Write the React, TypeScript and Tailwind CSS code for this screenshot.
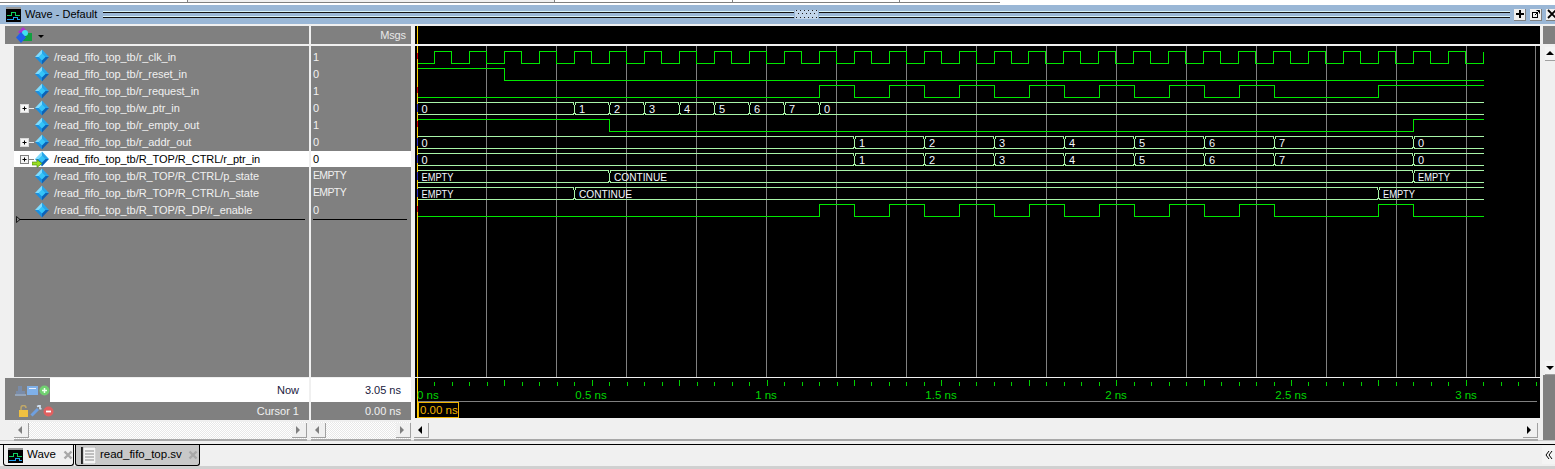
import React from "react";

const FONT = "[font-family:'Liberation_Sans',Arial,sans-serif]";

type Row = { name: string; value: string; expand?: boolean; selected?: boolean; arrow?: boolean };
const rows: Row[] = [
  { name: "/read_fifo_top_tb/r_clk_in", value: "1" },
  { name: "/read_fifo_top_tb/r_reset_in", value: "0" },
  { name: "/read_fifo_top_tb/r_request_in", value: "1" },
  { name: "/read_fifo_top_tb/w_ptr_in", value: "0", expand: true },
  { name: "/read_fifo_top_tb/r_empty_out", value: "1" },
  { name: "/read_fifo_top_tb/r_addr_out", value: "0", expand: true },
  { name: "/read_fifo_top_tb/R_TOP/R_CTRL/r_ptr_in", value: "0", expand: true, selected: true, arrow: true },
  { name: "/read_fifo_top_tb/R_TOP/R_CTRL/p_state", value: "EMPTY" },
  { name: "/read_fifo_top_tb/R_TOP/R_CTRL/n_state", value: "EMPTY" },
  { name: "/read_fifo_top_tb/R_TOP/R_DP/r_enable", value: "0" },
];

const END = 1483.5;
const LOGIC = "#00e800";
const BUS = "#a8f4a8";

function Diamond() {
  return (
    <svg width="16" height="16" viewBox="0 0 16 16" className="shrink-0">
      <polygon points="8,0.5 1,8 8,8" fill="#7fdcff" />
      <polygon points="8,0.5 15,8 8,8" fill="#27a6ea" />
      <polygon points="1,8 8,15.5 8,8" fill="#1a8fe0" />
      <polygon points="15,8 8,15.5 8,8" fill="#0b62b8" />
      <polygon points="8,4.5 11.5,8 8,11.5 4.5,8" fill="#35c4f8" />
    </svg>
  );
}

function PlusBox({ selected }: { selected?: boolean }) {
  return (
    <svg width="14" height="9" viewBox="0 0 14 9" className="shrink-0">
      <rect x="0.5" y="0.5" width="8" height="8" fill="#f4f4f4" stroke={selected ? "#808080" : "#d8d8d8"} />
      <path d="M2.5 4.5H6.5M4.5 2.5V6.5" stroke="#000" strokeWidth="1" />
      <path d="M9 4.5H14" stroke={selected ? "#808080" : "#e8e8e8"} strokeWidth="1" />
    </svg>
  );
}

function SignalRow({ row }: { row: Row }) {
  return (
    <div className="h-[17px] flex items-start">
      <div className={`h-[16px] w-full flex items-center relative ${row.selected ? "bg-white text-black" : "text-[#f0f0f0]"}`}>
        <div className="w-[6px] shrink-0" />
        <div className="w-[14px] shrink-0 flex items-center">{row.expand && <PlusBox selected={row.selected} />}</div>
        <div className="relative w-[16px] shrink-0 flex items-center">
          <Diamond />
          {row.arrow && (
            <svg width="11" height="9" viewBox="0 0 11 9" className="absolute left-[-2px] top-[8px]">
              <path d="M0 3H5V0.5L10 4.5L5 8.5V6H0Z" fill="#9adf20" stroke="#3f7f10" strokeWidth="0.6" />
            </svg>
          )}
        </div>
        <span className="ml-[4px] text-[11px] whitespace-nowrap tracking-[-0.005em]">{row.name}</span>
      </div>
    </div>
  );
}

function ScrollBtn({ dir, dark }: { dir: "l" | "r"; dark?: boolean }) {
  const pts = dir === "l" ? "7,2 3,6 7,10" : "3,2 7,6 3,10";
  return (
    <div className="w-[15px] h-[15px] bg-[#f0f0f0] border-r border-b border-[#a0a0a0] flex items-center justify-center shrink-0">
      <svg width="12" height="12" viewBox="0 0 12 12">
        <polygon points={pts} fill={dark ? "#000" : "#808080"} />
      </svg>
    </div>
  );
}

function VBtn({ dir }: { dir: "u" | "d" }) {
  const pts = dir === "u" ? "1,6 5,2 9,6" : "1,3 5,7 9,3";
  return (
    <div className="w-[10px] h-[14px] bg-[#f4f4f4] border-b border-[#a0a0a0] flex items-center justify-center shrink-0">
      <svg width="10" height="9" viewBox="0 0 10 9">
        <polygon points={pts} fill="#000" />
      </svg>
    </div>
  );
}

function HScroll({ dark }: { dark?: boolean }) {
  return (
    <div className={`h-[19px] flex items-start pt-[1px] justify-between border-b-2 border-[#a8a8a8] ${dark ? "bg-[#f0f0f0]" : "bg-[repeating-conic-gradient(#e8e8e8_0_25%,#ffffff_0_50%)] bg-[length:2px_2px]"}`}>
      <ScrollBtn dir="l" dark={dark} />
      <ScrollBtn dir="r" dark={dark} />
    </div>
  );
}

function clockPath() {
  let d = "M417 63.5";
  for (let k = 0; k < 31; k++) {
    const r = Math.round(434 + 34.97 * k) + 0.5;
    const f = Math.round(451 + 34.97 * k) + 0.5;
    if (k === 30) {
      d += ` H${r} V52`;
    } else {
      d += ` H${r} V51.5 H${f} V63.5`;
    }
  }
  return d;
}

function pulsePath(hi: number, lo: number, edges: number[], startHigh = false) {
  let d = `M417 ${startHigh ? hi : lo}`;
  let high = startHigh;
  for (const e of edges) {
    d += ` H${e} V${high ? lo : hi}`;
    high = !high;
  }
  return d + ` H${END}`;
}

function Bus({ top, edges, labels }: { top: number; edges: number[]; labels: string[] }) {
  const bot = top + 12;
  const xs = [418, ...edges];
  return (
    <g>
      {xs.map((x, i) => {
        const next = i + 1 < xs.length ? xs[i + 1] - 2 : END;
        const start = i === 0 ? 418 : x + 2;
        return (
          <g key={i}>
            <path d={`M${start} ${top} H${next} M${start} ${bot} H${next}`} stroke={BUS} fill="none" />
            {i > 0 && (
              <path
                d={`M${x} ${top + 2} V${bot - 1} M${x - 2} ${top} H${x - 1} V${top + 2} M${x + 2} ${top} H${x + 1} V${top + 2} M${x - 2} ${bot} H${x - 1} V${bot - 2} M${x + 2} ${bot} H${x + 1} V${bot - 2}`}
                stroke={BUS}
                fill="none"
              />
            )}
            <text
              x={i === 0 ? 421.5 : x + 4.5}
              y={top + 10}
              fill="#f4f8ff"
              fontSize="11"
              textLength={labels[i].length > 1 ? (labels[i] === "EMPTY" ? 32 : 53) : undefined}
              lengthAdjust="spacingAndGlyphs"
              fontFamily="'Liberation Sans', Arial, sans-serif"
              shapeRendering="auto"
            >
              {labels[i]}
            </text>
          </g>
        );
      })}
    </g>
  );
}

const enableEdges = [819.5, 854.5, 889.5, 924.5, 959.5, 994.5, 1029.5, 1064.5, 1099.5, 1134.5, 1169.5, 1204.5, 1239.5, 1274.5];
const addrEdges = [854.5, 924.5, 994.5, 1064.5, 1134.5, 1204.5, 1274.5, 1413.5];
const addrLabels = ["0", "1", "2", "3", "4", "5", "6", "7", "0"];

function Waves() {
  const grid = Array.from({ length: 15 }, (_, i) => 486.5 + 70 * i);
  return (
    <svg width="1125" height="331" viewBox="415 46 1125 331" className="block" shapeRendering="crispEdges">
      {grid.map((x) => (
        <path key={x} d={`M${x} 46V377`} stroke="#808080" />
      ))}
      <path d="M1535.5 46V377" stroke="#808080" />
      <g fill="none" stroke={LOGIC}>
        <path d={clockPath()} />
        <path d={pulsePath(68.5, 80.5, [504.5], true)} />
        <path d={pulsePath(85.5, 97.5, [...enableEdges, 1378.5])} />
        <path d={pulsePath(119.5, 131.5, [609.5, 1413.5], true)} />
        <path d={pulsePath(204.5, 216.5, [...enableEdges, 1378.5, 1413.5])} />
      </g>
      <Bus top={102.5} edges={[574.5, 609.5, 644.5, 679.5, 714.5, 749.5, 784.5, 819.5]} labels={["0", "1", "2", "3", "4", "5", "6", "7", "0"]} />
      <Bus top={136.5} edges={addrEdges} labels={addrLabels} />
      <Bus top={153.5} edges={addrEdges} labels={addrLabels} />
      <Bus top={170.5} edges={[609.5, 1413.5]} labels={["EMPTY", "CONTINUE", "EMPTY"]} />
      <Bus top={187.5} edges={[574.5, 1378.5]} labels={["EMPTY", "CONTINUE", "EMPTY"]} />
      <path d="M417.5 46V377" stroke="#ffd000" />
      {[53, 87, 121, 206].map((y) => (
        <path key={y} d={`M417.5 ${y}v6`} stroke="#e00000" />
      ))}
      {[104, 138, 155, 172, 189].map((y) => (
        <path key={y} d={`M417.5 ${y}v8`} stroke="#3030c0" />
      ))}
    </svg>
  );
}

function Ruler() {
  const ticks = Array.from({ length: 65 }, (_, i) => i);
  const labels = [
    { x: 591, t: "0.5 ns" },
    { x: 766, t: "1 ns" },
    { x: 941, t: "1.5 ns" },
    { x: 1116, t: "2 ns" },
    { x: 1291, t: "2.5 ns" },
    { x: 1466, t: "3 ns" },
  ];
  const f = "'Liberation Sans', Arial, sans-serif";
  return (
    <svg width="1125" height="40" viewBox="415 378 1125 40" className="block">
      <g shapeRendering="crispEdges">
        <path d="M417.5 378V418" stroke="#ffd000" />
        {ticks.map((i) => {
          const x = Math.round(417 + 17.48 * i) + 0.5;
          if (x > 1537 || i === 0) return null;
          return <path key={i} d={`M${x} ${i % 5 === 0 ? 380 : 382}V386`} stroke="#00d000" />;
        })}
        <path d="M418 401.5H1537" stroke="#808080" />
        <rect x="418.5" y="402.5" width="40" height="15" fill="#000" stroke="#f0b400" />
      </g>
      <text x="417" y="399" fill="#00d800" fontSize="11.5" fontFamily={f}>0 ns</text>
      {labels.map((l) => (
        <text key={l.t} x={l.x} y="399" fill="#00d800" fontSize="11.5" textAnchor="middle" fontFamily={f}>
          {l.t}
        </text>
      ))}
      <text x="420" y="414" fill="#f0b400" fontSize="11.5" fontFamily={f}>0.00 ns</text>
    </svg>
  );
}

function WaveGlyph() {
  return (
    <svg width="15" height="15" viewBox="0 0 15 15" className="shrink-0">
      <rect x="0" y="0" width="15" height="15" fill="#000" />
      <rect x="0" y="0" width="15" height="2" fill="#9a9a9a" />
      <path d="M1 8H5V5H9V8H14" stroke="#10d060" fill="none" shapeRendering="crispEdges" />
      <path d="M1 12H7V10H11V12H14" stroke="#20a0f0" fill="none" shapeRendering="crispEdges" />
    </svg>
  );
}

function CloseX() {
  return (
    <svg width="10" height="10" viewBox="0 0 10 10" className="shrink-0">
      <path d="M1.5 1.5L8.5 8.5M8.5 1.5L1.5 8.5" stroke="#a8a8a8" strokeWidth="2.4" />
    </svg>
  );
}

function Grip() {
  return (
    <div className="flex-1 h-[8px] flex flex-col mx-[1px]">
      <div className="h-[1px] bg-[#d8f4fb]" />
      <div className="h-[1px] bg-[#111]" />
      <div className="h-[3px]" />
      <div className="h-[1px] bg-[#d8f4fb]" />
      <div className="h-[1px] bg-[#111]" />
    </div>
  );
}

function TitleBtn({ children }: { children: React.ReactNode }) {
  return (
    <div className="w-[12px] h-[12px] bg-[#f0f0f0] border-r border-b border-[#808080] flex items-center justify-center shrink-0">{children}</div>
  );
}

export default function App() {
  return (
    <div className={`${FONT} w-[1555px] h-[469px] overflow-hidden bg-[#f0f0f0] flex flex-col relative`}>
      {/* clipped window above */}
      <div className="h-[5px] bg-white flex items-start shrink-0">
        <div className="w-[188px] h-[3px] border-r border-b border-[#808080]" />
        <div className="w-[367px] h-[3px] border-r border-b border-[#808080] bg-[#f0f0f0]" />
        <div className="w-[178px] h-[3px] border-r border-b border-[#808080]" />
        <div className="w-[167px] h-[3px] border-r border-b border-[#808080]" />
        <div className="w-[100px] h-[3px] border-b border-[#808080]" />
      </div>

      {/* title bar */}
      <div className="h-[19px] bg-[#9ab7d6] flex items-center pl-[6px] shrink-0 text-black">
        <WaveGlyph />
        <span className="ml-[4px] mr-[5px] text-[11px] whitespace-nowrap">Wave - Default</span>
        <Grip />
        <svg width="23" height="9" viewBox="0 0 23 9" className="shrink-0">
          <rect width="23" height="9" fill="#c2d6ea" />
          {[1, 5, 9, 13, 17, 21].map((x) => (
            <g key={x} fill="#202020">
              <rect x={x} y="0" width="1" height="1" />
              <rect x={x + 2} y="3" width="1" height="1" />
              <rect x={x} y="7" width="1" height="1" />
            </g>
          ))}
        </svg>
        <Grip />
        <div className="flex items-center gap-[4px] ml-[3px] w-[41px] shrink-0">
          <TitleBtn>
            <svg width="10" height="10" viewBox="0 0 10 10"><path d="M5 1V9M1 5H9" stroke="#000" strokeWidth="2" /></svg>
          </TitleBtn>
          <TitleBtn>
            <svg width="10" height="10" viewBox="0 0 10 10" fill="none" stroke="#000"><rect x="1.5" y="3.5" width="5" height="5" /><path d="M4 6L8.5 1.5M5.5 1.5H8.5V4.5" /></svg>
          </TitleBtn>
          <TitleBtn>
            <svg width="10" height="10" viewBox="0 0 10 10"><path d="M1 1L9 9M9 1L1 9" stroke="#000" strokeWidth="1.8" /></svg>
          </TitleBtn>
        </div>
      </div>

      {/* main panel */}
      <div className="h-[417px] flex items-start pt-[2px] pl-[5px] shrink-0 gap-[2px] border-b border-[#c8c8c8]">
        {/* names */}
        <div className="w-[304px] shrink-0 flex flex-col">
          <div className="h-[18px] bg-[#808080] flex items-center pl-[10px]">
            <svg width="18" height="17" viewBox="0 0 18 17" className="shrink-0">
              <polygon points="8,0 13,5 8,9 3,5" fill="#b030d0" />
              <rect x="8" y="6" width="9" height="8" fill="#10a040" />
              <circle cx="10" cy="6" r="3" fill="#40e0f0" />
              <polygon points="6,5 11,10.5 6,16 1,10.5" fill="#2060e8" />
            </svg>
            <svg width="6" height="4" viewBox="0 0 6 4" className="ml-[5px] mt-[3px]"><polygon points="0,0 6,0 3,3" fill="#000" /></svg>
          </div>
          <div className="h-[2px]" />
          <div className="h-[331px] flex bg-[#808080] relative">
            <div className="w-[9px] shrink-0 bg-[#f0f0f0]" />
            <div className="flex-1 pt-[3px] min-w-0">
              {rows.map((r) => (
                <SignalRow key={r.name} row={r} />
              ))}
            </div>
            <div className="absolute left-[11px] right-[4px] top-[173px] h-[1px] bg-black" />
            <svg width="5" height="7" viewBox="0 0 5 7" className="absolute left-[11px] top-[170px]"><polygon points="0.5,0.5 4,3.5 0.5,6.5" fill="#808080" stroke="#000" strokeWidth="0.8" /></svg>
          </div>
          <div className="h-[1px]" />
          <div className="h-[24px] bg-white flex items-center justify-between text-[11px] text-[#202040]">
            <div className="w-[45px] h-full bg-[#808080] flex items-center gap-[1px] pl-[10px]">
              <svg width="11" height="11" viewBox="0 0 11 11"><path d="M3 1H7V6H10V9H1V6H3Z" fill="#7a8ca8" /><path d="M0 10H11" stroke="#a8c8f0" /></svg>
              <svg width="11" height="11" viewBox="0 0 11 11"><rect width="11" height="9" y="1" fill="#7fb0e8" /><rect x="2" y="3" width="7" height="1" fill="#e8f0ff" /></svg>
              <svg width="11" height="11" viewBox="0 0 11 11"><circle cx="5.5" cy="5.5" r="5" fill="#70d070" /><path d="M5.5 3V8M3 5.5H8" stroke="#f0fff0" strokeWidth="1.5" /></svg>
            </div>
            <span className="pr-[10px]">Now</span>
          </div>
          <div className="h-[18px] bg-[#808080] flex items-center justify-between text-[11px] text-[#f0f0f0]">
            <div className="flex items-center gap-[1px] pl-[13px]">
              <svg width="11" height="12" viewBox="0 0 11 12"><path d="M3 6V3a2.5 2.5 0 0 1 5 0" stroke="#c0a868" fill="none" strokeWidth="1.5" /><rect x="1" y="5" width="9" height="7" fill="#f0c040" /></svg>
              <svg width="12" height="12" viewBox="0 0 12 12"><path d="M1.5 10.5L8 4" stroke="#6fa0e0" strokeWidth="3" /><path d="M7 1.5L10 0.5V3.5L11.5 4" stroke="#d0e0f0" strokeWidth="1.8" fill="none" /></svg>
              <svg width="11" height="11" viewBox="0 0 11 11"><circle cx="5.5" cy="5.5" r="5" fill="#e06060" /><path d="M3 5.5H8" stroke="#fff" strokeWidth="1.8" /></svg>
            </div>
            <span className="pr-[10px]">Cursor 1</span>
          </div>
          <div className="h-[2px]" />
          <div className="pl-[9px] pr-[2px]"><HScroll /></div>
        </div>

        {/* values */}
        <div className="w-[100px] shrink-0 flex flex-col">
          <div className="h-[18px] bg-[#808080] flex items-center justify-end pr-[5px] text-[11px] tracking-[-0.01em] text-[#e8e8e8]">Msgs</div>
          <div className="h-[2px]" />
          <div className="h-[331px] bg-[#808080] pt-[3px] relative">
            {rows.map((r) => (
              <div key={r.name} className="h-[17px] flex items-start">
                <div className={`h-[16px] w-full flex items-center pl-[2px] ${r.value === "EMPTY" ? "text-[10.5px] tracking-[-0.06em]" : "text-[11px]"} ${r.selected ? "bg-white text-black" : "text-[#f0f0f0]"}`}>{r.value}</div>
              </div>
            ))}
            <div className="absolute left-[2px] right-[4px] top-[173px] h-[1px] bg-black" />
          </div>
          <div className="h-[1px]" />
          <div className="h-[24px] bg-white flex items-center justify-end pr-[10px] text-[11px] text-[#202040]">3.05 ns</div>
          <div className="h-[18px] bg-[#808080] flex items-center justify-end pr-[10px] text-[11px] text-[#f0f0f0]">0.00 ns</div>
          <div className="h-[2px]" />
          <HScroll />
        </div>

        {/* waves */}
        <div className="w-[1125px] shrink-0 ml-[2px] flex flex-col">
          <div className="h-[18px] bg-black flex pl-[2px]"><div className="w-[1px] bg-[#ffd000]" /></div>
          <div className="h-[2px]" />
          <div className="h-[331px] bg-black"><Waves /></div>
          <div className="h-[1px]" />
          <div className="h-[40px] bg-black"><Ruler /></div>
          <div className="h-[4px]" />
          <div className="mr-[2px] -ml-[1px]"><HScroll dark /></div>
        </div>

        {/* vertical scrollbar */}
        <div className="flex-1 flex flex-col h-full pl-[1px]">
          <div className="h-[18px] bg-[#808080]" />
          <div className="h-[3px]" />
          <div className="h-[330px] bg-[#f0f0f0] flex flex-col justify-between items-end">
            <VBtn dir="u" />
            <VBtn dir="d" />
          </div>
          <div className="h-[65px] bg-[#808080]" />
        </div>
      </div>

      {/* tabs */}
      <div className="h-[3px] bg-[#f0f0f0] shrink-0" />
      <div className="h-[22px] border-t border-black flex items-start pl-[3px] shrink-0 relative">
        <div className="w-[71px] h-[21px] bg-[#f0f0f0] border border-t-0 border-black rounded-b-[3px] flex items-center pl-[4px] text-[11.5px] text-black">
          <WaveGlyph />
          <span className="ml-[4px] mr-[7px]">Wave</span>
          <CloseX />
        </div>
        <div className="ml-[1px] w-[125px] h-[21px] bg-[#c8c8c8] border border-t-0 border-black rounded-b-[3px] flex items-center pl-[5px] text-[11.5px] text-black">
          <svg width="15" height="17" viewBox="0 0 15 17" className="shrink-0">
            <rect width="15" height="17" fill="#202020" />
            <rect x="2" y="0" width="13" height="17" fill="#f4f4f4" stroke="#707070" strokeWidth="0.5" />
            <path d="M4 4H13M4 7H13M4 10H13M4 13H13" stroke="#8a8a8a" />
          </svg>
          <span className="ml-[4px] mr-[6px] whitespace-nowrap">read_fifo_top.sv</span>
          <CloseX />
        </div>
        <div className="absolute right-[0px] top-[1px] w-[13px] h-[18px] bg-[#f4f4f4] flex items-center justify-center">
          <svg width="8" height="10" viewBox="0 0 8 10" fill="none" stroke="#000"><path d="M4 1L1 5L4 9M7 1L4 5L7 9" /></svg>
        </div>
      </div>
      <div className="flex-1 bg-[#d0d0d0]" />
    </div>
  );
}
